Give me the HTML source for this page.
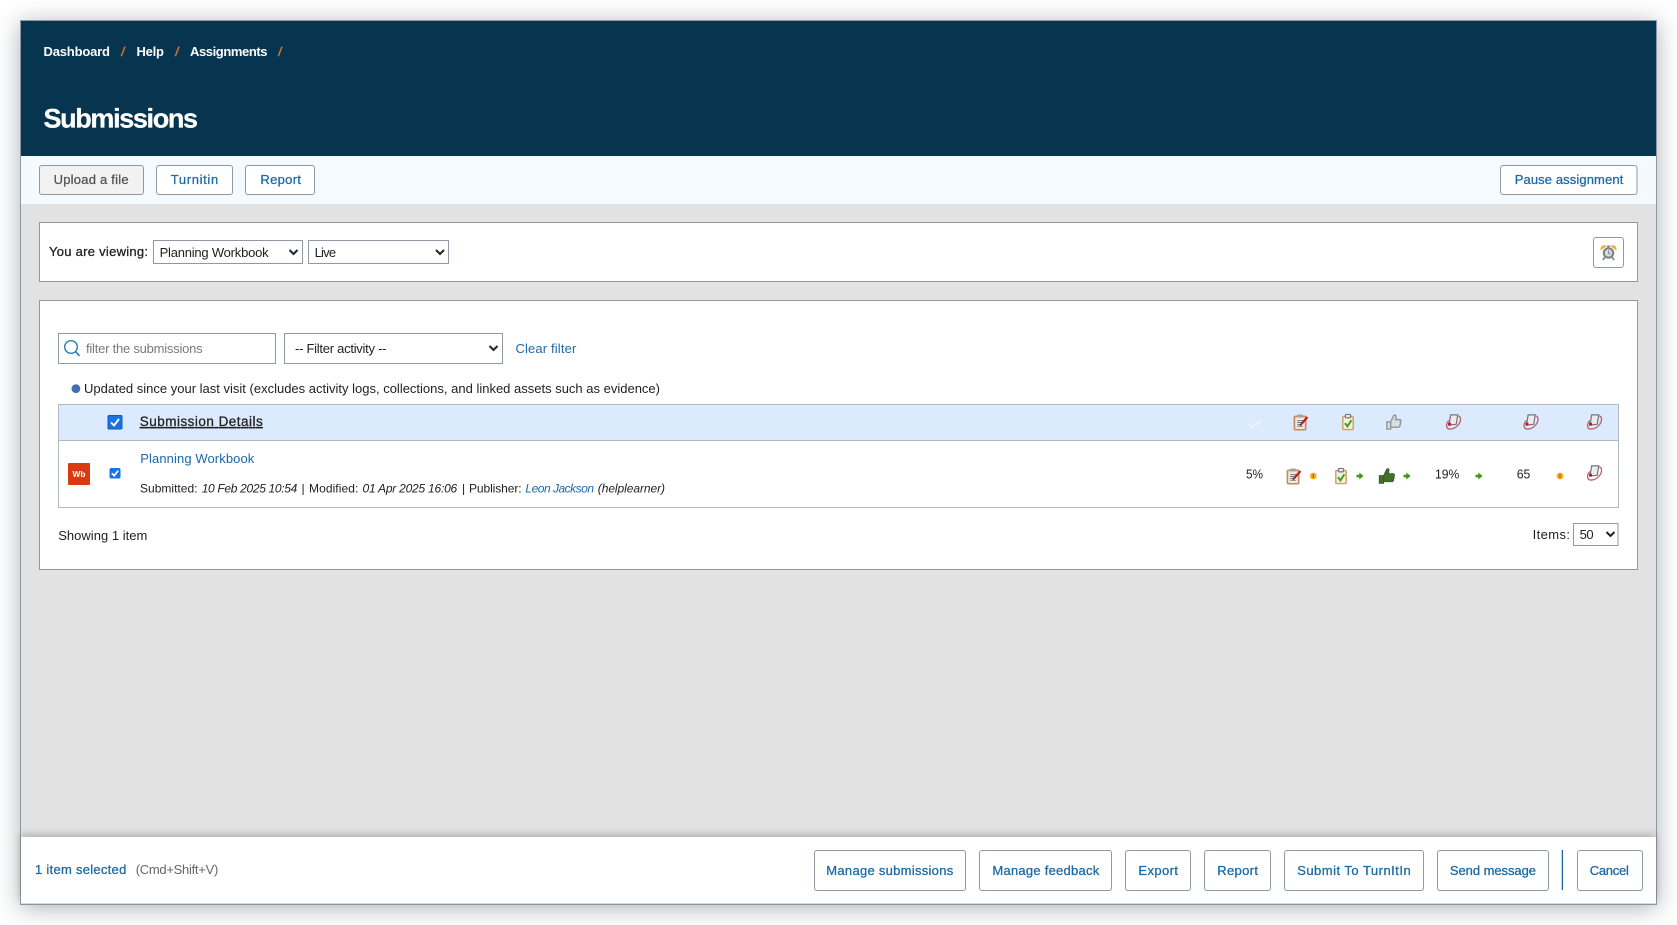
<!DOCTYPE html>
<html lang="en">
<head>
<meta charset="utf-8">
<title>Submissions</title>
<style>
html,body{margin:0;padding:0;width:1677px;height:925px;background:#fff;overflow:hidden}
#win{position:absolute;left:20px;top:20px;width:1635px;height:883px;border:1px solid #8f99a3;background:#e2e2e2;box-shadow:0 3px 22px rgba(40,50,60,.38)}
#bar{position:absolute;left:21px;top:837px;width:1635px;height:66px;background:#fff;box-shadow:0 -3px 7px rgba(0,0,0,.2)}
svg{position:absolute;left:0;top:0}
text{font-family:"Liberation Sans",sans-serif;font-size:13px;fill:#1f1f1f}
.b{fill:#1a6aa8}
.s{stroke:currentColor;stroke-width:.28px}
.btn{fill:#fff;stroke:#8f99a3;stroke-width:1}
.box{fill:#fff;stroke:#8f99a3;stroke-width:1}
.crumb{font-weight:bold;fill:#fff}
.sl{font-weight:bold;font-style:italic;fill:#e8701e}
.m{font-size:12px}
.i{font-style:italic}
.chev{fill:none;stroke:#222;stroke-width:2}
</style>
</head>
<body>
<div id="win"></div>
<div id="bar"></div>
<svg width="1677" height="925" viewBox="0 0 1677 925" xmlns="http://www.w3.org/2000/svg">
<defs>
<symbol id="clipr" viewBox="0 0 18 18">
<rect x="2" y="3" width="12" height="14.200" rx="1.200" fill="#e9e3da" stroke="#c98a58" stroke-width="1.700"/>
<rect x="4.300" y="5.500" width="7.500" height="10" fill="#efefef"/>
<path d="M5 7.500h6.500M5 9.500h6M5 11.500h5M5 13.500h6" stroke="#77777a" stroke-width="1.100"/>
<rect x="5" y="1" width="6" height="3.200" rx="1" fill="#a9a296"/>
<path d="M9.500 11L15.800 3.800" stroke="#c8141c" stroke-width="2.300"/>
<path d="M8 12.800l1.500-1.800" stroke="#333" stroke-width="1.500"/>
</symbol>
<symbol id="clipc" viewBox="0 0 18 18">
<rect x="3.500" y="3.200" width="11" height="13.800" rx=".8" fill="#f6f1df" stroke="#cf9f63" stroke-width="1.500"/>
<rect x="6.200" y="1" width="5.600" height="3.600" rx="1.200" fill="#e8e8e8" stroke="#77787c" stroke-width="1.300"/>
<path d="M5.800 10.200l2.600 3.400 4.200-6.400" fill="none" stroke="#46a02c" stroke-width="2.200"/>
</symbol>
<symbol id="thumbg" viewBox="0 0 18 18">
<path d="M1.500 9h4v7.500h-4zM5.500 9l3-6.500c.8-1.300 2.800-.8 2.600 1l-.5 3h4.400c1.500 0 1.800 2 .6 2.600.8.800.6 2.200-.3 2.600.3 1.200-.2 2.200-1.200 2.800H7l-1.500-.8z" fill="#dcdfe2" stroke="#93979b" stroke-width="1.500"/>
</symbol>
<symbol id="thumbd" viewBox="0 0 18 18">
<path d="M.8 8.500h4.700v8.300H.8zM5.500 8.500l3-6.500c.8-1.300 2.800-.8 2.600 1l-.5 3.500h5c1.500 0 1.800 2.300.6 2.900.8.800.6 2.300-.3 2.700.3 1.200-.2 2.400-1.200 3H7l-1.500-.8z" fill="#44702f" stroke="#335a24" stroke-width=".9"/>
</symbol>
<symbol id="tii" viewBox="0 0 18 18">
<path d="M6.500 1.500h7.500l-1.600 10-7.600.6z" fill="#ececec" stroke="#75757a" stroke-width="1.300"/>
<path d="M4.500 7.500C1 11.500 1.500 16.500 6 16.500c5 0 11-5 11-10.500 0-2-1-3.200-2.500-3.500" fill="none" stroke="#c0606b" stroke-width="1.400"/>
<rect x="3.800" y="9.800" width="3" height="3" fill="#b5121f"/>
</symbol>
<symbol id="warn" viewBox="0 0 8 8">
<circle cx="4" cy="4" r="3.900" fill="#f8ac1c"/>
<rect x="3.200" y="1.800" width="1.600" height="2.700" fill="#a86600"/>
<rect x="3.200" y="5" width="1.600" height="1.300" fill="#a86600"/>
</symbol>
<symbol id="arr" viewBox="0 0 8 8">
<path d="M0 2.500h3.200V0L8 4 3.200 8V5.500H0z" fill="#3a9a10"/>
</symbol>
<symbol id="alarm" viewBox="0 0 18 18">
<path d="M1 6C.8 3 3 1.300 6.200 2.200zM17 6c.2-3-2-4.700-5.200-3.800z" fill="#efa83a" stroke="#efa83a"/>
<circle cx="9" cy="9.500" r="5" fill="#d6dadd" stroke="#7d838a" stroke-width="2.200"/>
<path d="M9 7v2.800l1.800 1" fill="none" stroke="#7d838a" stroke-width="1"/>
<path d="M5 14l-1.800 3M13 14l1.800 3M7.500 2.500h3" stroke="#7d838a" stroke-width="1.800" fill="none"/>
</symbol>
</defs>

<!-- header -->
<rect x="21" y="21" width="1635" height="135" fill="#07344f"/>
<text class="crumb" x="43.500" y="56.200" textLength="66.500">Dashboard</text>
<text class="sl" x="121" y="56.200">/</text>
<text class="crumb" x="136.500" y="56.200" textLength="27.500">Help</text>
<text class="sl" x="175" y="56.200">/</text>
<text class="crumb" x="190" y="56.200" textLength="77.500">Assignments</text>
<text class="sl" x="278" y="56.200">/</text>
<text x="43.500" y="127.700" textLength="154.500" style="font-size:27px;font-weight:bold;fill:#fff;stroke:#fff;stroke-width:.3px">Submissions</text>

<!-- toolbar -->
<rect x="21" y="156" width="1635" height="48" fill="#f5fafe"/>
<rect x="39.500" y="165.500" width="104" height="29" rx="2.500" fill="#f2f2f2" stroke="#8f99a3"/>
<text class="s" x="53.600" y="184" textLength="75" style="color:#555;fill:#555">Upload a file</text>
<rect class="btn" x="156.500" y="165.500" width="76" height="29" rx="2.500"/>
<text class="b s" x="170.700" y="184" textLength="47.500" style="color:#1a6aa8">Turnitin</text>
<rect class="btn" x="245.500" y="165.500" width="69" height="29" rx="2.500"/>
<text class="b s" x="260.400" y="184" textLength="40.600" style="color:#1a6aa8">Report</text>
<rect class="btn" x="1500.500" y="165.500" width="136.500" height="29" rx="2.500"/>
<text class="b s" x="1514.700" y="184" textLength="108.600" style="color:#1a6aa8">Pause assignment</text>

<!-- viewing panel -->
<rect class="box" x="39.500" y="222.500" width="1598" height="59"/>
<text class="s" x="49" y="256" textLength="99" style="color:#1f1f1f">You are viewing:</text>
<rect class="box" x="153.500" y="240.500" width="149" height="23"/>
<text x="159.600" y="257" textLength="109">Planning Workbook</text>
<path class="chev" d="M289.500 250l4 4 4-4"/>
<rect class="box" x="308.500" y="240.500" width="140" height="23"/>
<text x="314.600" y="257" textLength="21.500">Live</text>
<path class="chev" d="M436 250l4 4 4-4"/>
<rect x="1593.500" y="237.500" width="30" height="30" rx="2.500" fill="#fff" stroke="#8f99a3"/>
<use href="#alarm" x="1600" y="244" width="17" height="17"/>

<!-- main panel -->
<rect class="box" x="39.500" y="300.500" width="1598" height="269"/>
<rect class="box" x="58.500" y="333.500" width="217" height="30"/>
<circle cx="71" cy="347" r="6.300" fill="none" stroke="#2a7ab5" stroke-width="1.400"/>
<path d="M75.500 351.500l4 4.500" stroke="#2a7ab5" stroke-width="1.600"/>
<text x="86" y="353" textLength="116.600" style="fill:#7a7a7a">filter the submissions</text>
<rect class="box" x="284.500" y="333.500" width="218" height="30"/>
<text x="295" y="353" textLength="91.500">-- Filter activity --</text>
<path class="chev" d="M489.500 346l4 4 4-4"/>
<text class="b" x="515.500" y="353" textLength="60.800">Clear filter</text>

<circle cx="75.900" cy="388.700" r="4.400" fill="#3f6fb5"/>
<text x="84" y="392.800" textLength="576">Updated since your last visit (excludes activity logs, collections, and linked assets such as evidence)</text>

<!-- table -->
<rect x="58.500" y="404.500" width="1560" height="36" fill="#dbeafc" stroke="#b4b9be"/>
<rect x="58.500" y="440.500" width="1560" height="67" fill="#fff" stroke="#b4b9be"/>
<rect x="108" y="415.500" width="14" height="13.500" rx="1" fill="#1a73e0" stroke="#0d5cb8"/>
<path d="M111 422.500l3 3 5-6.500" fill="none" stroke="#fff" stroke-width="1.900"/>
<text class="s" x="139.800" y="426" textLength="122.900" style="font-size:13.500px;text-decoration:underline;color:#1f1f1f">Submission Details</text>

<path d="M1249 424.500l3 2.500 4-3.500 1 1 4-4" fill="none" stroke="#eef4fb" stroke-width="1.800"/>
<use href="#clipr" x="1292.500" y="413.500" width="17" height="17"/>
<use href="#clipc" x="1339.500" y="413.500" width="17" height="17"/>
<use href="#thumbg" x="1385.500" y="413.500" width="17" height="17"/>
<use href="#tii" x="1444.500" y="413.500" width="17" height="17"/>
<use href="#tii" x="1522" y="413.500" width="17" height="17"/>
<use href="#tii" x="1585.500" y="413.500" width="17" height="17"/>

<rect x="68" y="463" width="22" height="22" rx="1" fill="#d83b12"/>
<text x="72.500" y="477" textLength="13" style="font-size:8.500px;font-weight:bold;fill:#fff" lengthAdjust="spacingAndGlyphs">Wb</text>
<rect x="109.500" y="468" width="11" height="10.500" rx="1.800" fill="#1a73e0"/>
<path d="M111.800 473.200l2.400 2.500 4-5" fill="none" stroke="#fff" stroke-width="1.700"/>

<text class="b" x="140.300" y="463" textLength="114">Planning Workbook</text>
<text class="m" x="140" y="492.700" textLength="57.500">Submitted:</text>
<text class="m i" x="201.700" y="492.700" textLength="95.600">10 Feb 2025 10:54</text>
<text class="m" x="301.500" y="492.700">|</text>
<text class="m" x="309" y="492.700" textLength="49.300">Modified:</text>
<text class="m i" x="362.500" y="492.700" textLength="94.700">01 Apr 2025 16:06</text>
<text class="m" x="462" y="492.700">|</text>
<text class="m" x="469" y="492.700" textLength="52.600">Publisher:</text>
<text class="m i b" x="525.400" y="492.700" textLength="68.600">Leon Jackson</text>
<text class="m i" x="597.800" y="492.700" textLength="67.200">(helplearner)</text>

<text x="1246" y="478.300" textLength="17" lengthAdjust="spacingAndGlyphs">5%</text>
<use href="#clipr" x="1285.500" y="467.500" width="17" height="17"/>
<use href="#warn" x="1309.800" y="472.500" width="7" height="7"/>
<use href="#clipc" x="1332.500" y="467.500" width="17" height="17"/>
<use href="#arr" x="1356.500" y="472.500" width="7" height="7"/>
<use href="#thumbd" x="1378.500" y="467.500" width="17" height="17"/>
<use href="#arr" x="1403.500" y="472.500" width="7" height="7"/>
<text x="1435" y="478.300" textLength="24.300" lengthAdjust="spacingAndGlyphs">19%</text>
<use href="#arr" x="1475.500" y="472.500" width="7" height="7"/>
<text x="1516.700" y="478.300" textLength="13.600" lengthAdjust="spacingAndGlyphs">65</text>
<use href="#warn" x="1556.500" y="472.500" width="7" height="7"/>
<use href="#tii" x="1585.500" y="464.500" width="17" height="17"/>

<text x="58.200" y="540" textLength="89.200">Showing 1 item</text>
<text x="1532.600" y="539" textLength="37.400">Items:</text>
<rect class="box" x="1573.500" y="523.500" width="44.500" height="22"/>
<text x="1579.600" y="539" textLength="14">50</text>
<path class="chev" d="M1606.500 532l4 4 4-4"/>

<!-- bottom bar -->
<text class="b s" x="35" y="874" textLength="91.300" style="color:#1a6aa8">1 item selected</text>
<text x="135.700" y="874" textLength="82.600" style="fill:#666">(Cmd+Shift+V)</text>
<rect class="btn" x="814.500" y="850.500" width="151" height="40" rx="2.500"/>
<text class="b s" x="826.300" y="875" textLength="126.900" style="color:#1a6aa8">Manage submissions</text>
<rect class="btn" x="979.500" y="850.500" width="132" height="40" rx="2.500"/>
<text class="b s" x="992.400" y="875" textLength="106.800" style="color:#1a6aa8">Manage feedback</text>
<rect class="btn" x="1125.500" y="850.500" width="65" height="40" rx="2.500"/>
<text class="b s" x="1138.400" y="875" textLength="39.600" style="color:#1a6aa8">Export</text>
<rect class="btn" x="1204.500" y="850.500" width="66" height="40" rx="2.500"/>
<text class="b s" x="1217.200" y="875" textLength="40.800" style="color:#1a6aa8">Report</text>
<rect class="btn" x="1284.500" y="850.500" width="139" height="40" rx="2.500"/>
<text class="b s" x="1297.200" y="875" textLength="113.500" style="color:#1a6aa8">Submit To TurnItIn</text>
<rect class="btn" x="1437.500" y="850.500" width="111" height="40" rx="2.500"/>
<text class="b s" x="1449.900" y="875" textLength="86.100" style="color:#1a6aa8">Send message</text>
<rect x="1561.700" y="850" width="1.300" height="40" fill="#1a6aa8"/>
<rect class="btn" x="1577.500" y="850.500" width="65" height="40" rx="2.500"/>
<text class="b s" x="1589.700" y="875" textLength="39.200" style="color:#1a6aa8">Cancel</text>
</svg>
</body>
</html>
